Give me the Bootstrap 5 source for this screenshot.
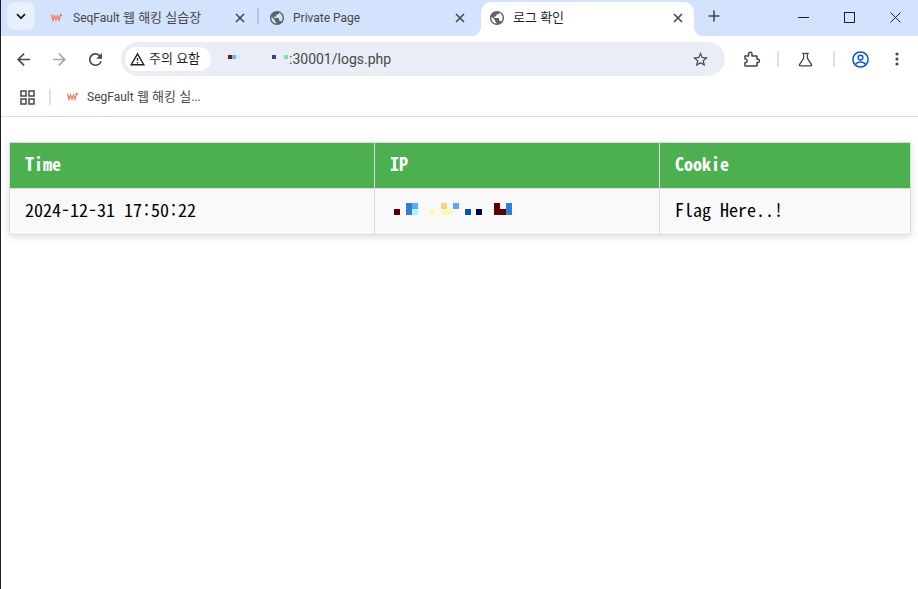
<!DOCTYPE html>
<html lang="ko">
<head>
<meta charset="utf-8">
<title>로그 확인</title>
<link href="https://cdn.jsdelivr.net/npm/bootstrap@5.3.0/dist/css/bootstrap.min.css" rel="stylesheet">
<style>
html,body{height:100%;overflow:hidden}
body{background:#fff;border-left:1px solid #1f1f1f;font-family:Roboto,"Noto Sans CJK KR",sans-serif;color:#1f1f1f}
.strip{height:36px;background:#d3e3fd;padding-left:6px}
.tab-menu{width:28px;height:28px;margin-top:2px;background:#e8f0fe;border-radius:8px;margin-right:6px}
.chrome-tab{width:219px;height:34px;margin-top:2px;padding:0 9px 2px 11px;font-size:13px;color:#474747;gap:9px;position:relative}
.chrome-tab.first{width:217px;padding-left:10px}
.chrome-tab.active{width:213px;background:#fff;border-radius:10px 10px 0 0;color:#1f1f1f;margin-left:3px;padding:0 7px 2px 9px}
.chrome-tab.active::before,.chrome-tab.active::after{content:"";position:absolute;bottom:0;width:10px;height:10px}
.chrome-tab.active::before{left:-10px;background:radial-gradient(circle at 0 0,transparent 10px,#fff 10.5px)}
.chrome-tab.active::after{right:-10px;background:radial-gradient(circle at 100% 0,transparent 10px,#fff 10.5px)}
.tab-title{flex:1 1 auto;white-space:nowrap;overflow:hidden}
.latin-txt{font-size:12px}
.fav-gap{margin-right:1px}
.tab-sep{width:2px;height:16px;background:#a8c7fa;margin-top:8px;margin-left:-1px}
.new-tab{margin:10px 0 0 14px}
.win-btns{margin-left:auto;width:138px}
.win-btns span{width:46px}
.toolbar{height:44px;background:#fff;border-radius:8px 8px 0 0;padding:2px 0 0 5px}
.nav-ico{width:34px;height:34px;flex:none}
.nav-next{margin-left:2px}
.omni{width:604px;height:34px;background:#e9eef6;border-radius:17px;margin-left:9px;padding:0 9px 0 4px;font-size:14px;color:#474747}
.warn-chip{width:86px;height:24px;background:#fff;border-radius:12px;font-size:13px;color:#1f1f1f;padding-left:5px;gap:4px;white-space:nowrap}
.url-bits{margin-left:17px}
.tool-sep{width:2px;height:16px;background:#d3e3fd}
.sep-a{margin:0 19px 0 16px}
.sep-b{margin:0 17px 0 20px}
.tools{margin-left:19px}
.dots-ico{margin-left:26px}
.marks{height:37px;border-bottom:1px solid #dfdfdf;padding:0 0 2px 19px;font-size:13px;color:#474747}
.marks .mark-sep{width:2px;height:16px;background:#d3e3fd;margin:0 16px 0 14px}
.mark-fav{margin-right:8px}
.page-body{padding:25px 6px 0 8px}
.log-table{width:902px;table-layout:fixed;margin:0;border-collapse:collapse;box-shadow:0 2px 8px rgba(0,0,0,.13);font-family:"Noto Sans Mono CJK KR","Liberation Mono",monospace;font-size:18px}
.log-table th,.log-table td{height:46px;padding:0 15px 6px;border:1px solid #ddd;vertical-align:middle;line-height:18px}
.log-table th{background:#4caf50;color:#fff;font-weight:700}
.log-table td{background:#f9f9f9;color:#000}
.time-colon{font-size:17.99px}
.ip-bits{margin:0 0 0 4px}
.c-time{width:365px}.c-ip{width:285px}
</style>
</head>
<body>
<svg width="0" height="0" class="d-block">
<defs>
<symbol id="globe" viewBox="2 2 20 20"><path fill="#5f6368" d="M12 2C6.48 2 2 6.48 2 12s4.48 10 10 10 10-4.48 10-10S17.52 2 12 2zm-1 17.930c-3.950-.490-7-3.850-7-7.930 0-.620.080-1.210.210-1.790L9 15v1c0 1.100.900 2 2 2v1.930zm6.900-2.540c-.260-.810-1-1.390-1.900-1.390h-1v-3c0-.550-.450-1-1-1H8v-2h2c.550 0 1-.450 1-1V7h2c1.100 0 2-.900 2-2v-.410c2.930 1.190 5 4.060 5 7.410 0 2.080-.800 3.970-2.100 5.390z"/></symbol>
<symbol id="close" viewBox="0 0 10 10"><path d="M1 1l8 8M9 1l-8 8" stroke="#474747" stroke-width="1.6" fill="none"/></symbol>
<symbol id="fav" viewBox="0 0 12 10"><path d="M.5 1.500l1.500 6 1.500-4.500 1.500 4 1.500-4 1.500 4 1.500-5.500 1.500 1.500" stroke="#f2795f" stroke-width="1.3" fill="none"/><path d="M2 8.500h8" stroke="#d8d8d8" stroke-width="1.2" opacity=".6"/></symbol>
</defs>
</svg>

<div class="strip d-flex align-items-start">
  <div class="tab-menu d-flex align-items-center justify-content-center flex-shrink-0">
    <svg width="10" height="7" viewBox="0 0 10 7"><path d="M1 1.200l4 4 4-4" stroke="#1f1f1f" stroke-width="1.8" fill="none"/></svg>
  </div>
  <div class="chrome-tab first d-flex align-items-center">
    <svg width="12" height="10" class="flex-shrink-0 fav-gap"><use href="#fav"/></svg>
    <span class="tab-title"><span class="latin-txt">SeqFault</span> 웹 해킹 실습장</span>
    <svg width="10" height="10" class="flex-shrink-0 me-1"><use href="#close"/></svg>
  </div>
  <div class="tab-sep flex-shrink-0"></div>
  <div class="chrome-tab d-flex align-items-center">
    <svg width="14" height="14" class="flex-shrink-0"><use href="#globe"/></svg>
    <span class="tab-title latin-txt">Private Page</span>
    <svg width="10" height="10" class="flex-shrink-0 me-1"><use href="#close"/></svg>
  </div>
  <div class="chrome-tab active d-flex align-items-center">
    <svg width="14" height="14" class="flex-shrink-0"><use href="#globe"/></svg>
    <span class="tab-title">로그 확인</span>
    <svg width="10" height="10" class="flex-shrink-0 me-1"><use href="#close"/></svg>
  </div>
  <svg width="12" height="12" viewBox="0 0 12 12" class="flex-shrink-0 new-tab"><path d="M6 .5v11M.5 6h11" stroke="#474747" stroke-width="1.6"/></svg>
  <div class="win-btns d-flex">
    <span class="d-flex justify-content-center pt-2 mt-1"><svg width="11" height="11" viewBox="0 0 11 11"><path d="M0 5.500h11" stroke="#1f1f1f"/></svg></span>
    <span class="d-flex justify-content-center pt-2 mt-1"><svg width="11" height="11" viewBox="0 0 11 11"><rect x=".5" y=".5" width="10" height="10" fill="none" stroke="#1f1f1f"/></svg></span>
    <span class="d-flex justify-content-center pt-2 mt-1"><svg width="11" height="11" viewBox="0 0 11 11"><path d="M.5.500l10 10M10.500.500l-10 10" stroke="#1f1f1f" fill="none"/></svg></span>
  </div>
</div>

<div class="toolbar d-flex align-items-center">
  <div class="nav-ico d-flex align-items-center justify-content-center"><svg width="13" height="13" viewBox="4 4 16 16"><path fill="#474747" d="M20 11H7.830l5.590-5.590L12 4l-8 8 8 8 1.410-1.410L7.830 13H20z"/></svg></div>
  <div class="nav-ico nav-next d-flex align-items-center justify-content-center"><svg width="13" height="13" viewBox="4 4 16 16"><path fill="#a8a8a8" d="M4 11h12.170l-5.590-5.590L12 4l8 8-8 8-1.410-1.410L16.170 13H4z"/></svg></div>
  <div class="nav-ico nav-next d-flex align-items-center justify-content-center"><svg width="13" height="13" viewBox="4 4 16 16"><path fill="#474747" d="M17.650 6.350A7.950 7.950 0 0012 4c-4.420 0-7.990 3.580-7.990 8s3.570 8 7.990 8c3.730 0 6.840-2.550 7.730-6h-2.080A5.990 5.990 0 0112 18c-3.310 0-6-2.690-6-6s2.690-6 6-6c1.660 0 3.140.690 4.220 1.780L13 11h7V4l-2.350 2.350z"/></svg></div>
  <div class="omni d-flex align-items-center">
    <div class="warn-chip d-flex align-items-center flex-shrink-0">
      <svg width="15" height="14" viewBox="1 2 22 19"><path fill="#1f1f1f" d="M1 21h22L12 2 1 21zm3.470-2L12 5.990 19.530 19H4.470zM11 16h2v2h-2zm0-6h2v4h-2z"/></svg>
      <span>주의 요함</span>
    </div>
    <svg width="61" height="8" viewBox="0 0 61 8" class="url-bits flex-shrink-0"><rect y="0" width="4" height="4" fill="#6b1a1a"/><rect x="4" width="4" height="4" fill="#6bb5f5"/><rect x="8" width="4" height="4" fill="#c8ecfa"/><rect x="44" width="4" height="4" fill="#3f3f8f"/><rect x="56" width="4" height="4" fill="#8fd3b8"/></svg>
    <span class="flex-grow-1">:30001/logs.php</span>
    <svg width="15" height="15" viewBox="2 2 20 20" class="flex-shrink-0 me-2"><path fill="#474747" d="M22 9.240l-7.190-.620L12 2 9.190 8.630 2 9.240l5.460 4.730L5.820 21 12 17.270 18.180 21l-1.630-7.030L22 9.240zM12 15.400l-3.760 2.270 1-4.280-3.320-2.880 4.380-.380L12 6.100l1.710 4.040 4.380.380-3.320 2.880 1 4.280L12 15.400z"/></svg>
  </div>
  <div class="tools d-flex align-items-center">
    <svg width="17" height="16" viewBox="0 0 17 16" class="flex-shrink-0"><path d="M1 5h3.600V3a1.700 1.700 0 013.400 0v2H13v3.200h1.200a1.700 1.700 0 010 3.300H13V15H1v-3.500h1a1.800 1.800 0 000-3.400H1z" fill="none" stroke="#474747" stroke-width="1.5" stroke-linejoin="round"/></svg>
    <div class="tool-sep sep-a"></div>
    <svg width="15" height="15" viewBox="0 0 16 15" class="flex-shrink-0"><path d="M4.500 1h7M6 1v5L1.500 13.200c-.3.500 0 1 .6 1h11.800c.6 0 .9-.5.6-1L10 6V1" fill="none" stroke="#474747" stroke-width="1.4" stroke-linejoin="round"/></svg>
    <div class="tool-sep sep-b"></div>
    <svg width="17" height="17" viewBox="0 0 17 17" class="flex-shrink-0"><circle cx="8.500" cy="8.500" r="7.600" fill="none" stroke="#0b57d0" stroke-width="1.5"/><circle cx="8.500" cy="6.600" r="2.400" fill="none" stroke="#0b57d0" stroke-width="1.4"/><path d="M3.600 13.400c1-1.700 3-2.400 4.900-2.400s3.900.7 4.900 2.400" fill="none" stroke="#0b57d0" stroke-width="1.4"/></svg>
    <svg width="4" height="14" viewBox="0 0 4 14" class="flex-shrink-0 dots-ico"><circle cx="2" cy="2" r="1.600" fill="#474747"/><circle cx="2" cy="7" r="1.600" fill="#474747"/><circle cx="2" cy="12" r="1.600" fill="#474747"/></svg>
  </div>
</div>

<div class="marks d-flex align-items-center">
  <svg width="15" height="15" viewBox="0 0 15 15" class="flex-shrink-0"><g fill="none" stroke="#474747" stroke-width="1.5"><rect x="1" y="1" width="5" height="5"/><rect x="9" y="1" width="5" height="5"/><rect x="1" y="9" width="5" height="5"/><rect x="9" y="9" width="5" height="5"/></g></svg>
  <div class="mark-sep flex-shrink-0"></div>
  <svg width="12" height="10" class="flex-shrink-0 mark-fav"><use href="#fav"/></svg>
  <span><span class="latin-txt">SegFault</span> 웹 해킹 실<span class="latin-txt">...</span></span>
</div>

<div class="page-body">
  <table class="log-table">
    <colgroup><col class="c-time"><col class="c-ip"><col></colgroup>
    <thead><tr><th>Time</th><th>IP</th><th>Cookie</th></tr></thead>
    <tbody>
      <tr>
        <td>2024-12-31 17<span class="time-colon">:</span>50<span class="time-colon">:</span>22</td>
        <td>
          <svg width="118" height="12" viewBox="0 0 118 12" class="d-block ip-bits">
            <rect x="0" y="6" width="6" height="6" fill="#5a0000"/>
            <rect x="12" y="0" width="6" height="12" fill="#2f7fd3"/>
            <rect x="18" y="0" width="6" height="6" fill="#5aabf5"/>
            <rect x="18" y="6" width="6" height="6" fill="#aaf5ff"/>
            <rect x="35" y="6" width="6" height="6" fill="#fdf8b5"/>
            <rect x="47" y="0" width="6" height="6" fill="#fbd184"/>
            <rect x="47" y="6" width="12" height="6" fill="#fdf8b5"/>
            <rect x="59" y="0" width="6" height="6" fill="#5aabf5"/>
            <rect x="71" y="6" width="6" height="6" fill="#0058b0"/>
            <rect x="82" y="6" width="6" height="6" fill="#000055"/>
            <rect x="100" y="0" width="6" height="12" fill="#5a0000"/>
            <rect x="106" y="6" width="6" height="6" fill="#5a0000"/>
            <rect x="112" y="0" width="6" height="12" fill="#2f7fd3"/>
          </svg>
        </td>
        <td>Flag Here..!</td>
      </tr>
    </tbody>
  </table>
</div>
</body>
</html>
